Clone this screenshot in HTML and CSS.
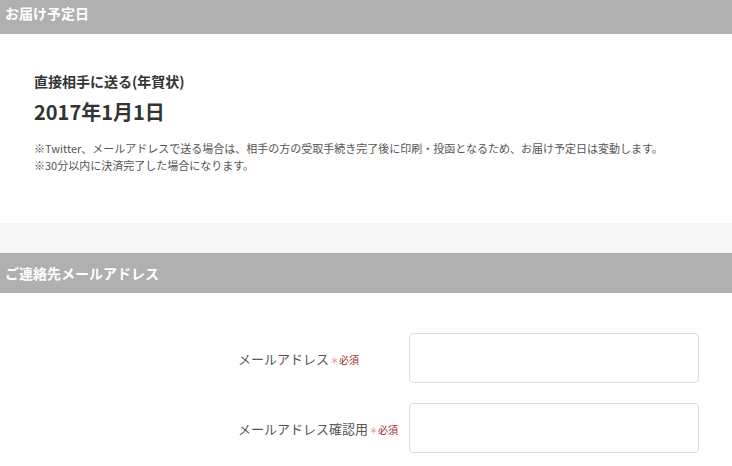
FILE: index.html
```html
<!DOCTYPE html>
<html lang="ja">
<head>
<meta charset="utf-8">
<title>お届け予定日</title>
<link rel="stylesheet" href="styles.css">
</head>
<body>
<section class="sec">
  <h2 class="sec-head sec-head--first">お届け予定日</h2>
  <div class="delivery">
    <p class="delivery-method">直接相手に送る(年賀状)</p>
    <p class="delivery-date">2017年1月1日</p>
    <p class="note">※Twitter、メールアドレスで送る場合は、相手の方の受取手続き完了後に印刷・投函となるため、お届け予定日は変動します。</p>
    <p class="note">※30分以内に決済完了した場合になります。</p>
  </div>
</section>
<div class="spacer"></div>
<section class="sec">
  <h2 class="sec-head">ご連絡先メールアドレス</h2>
  <div class="form">
    <div class="row">
      <label class="label" for="mail">メールアドレス<span class="req"><span class="req-star">＊</span>必須</span></label>
      <input class="input" id="mail" type="text">
    </div>
    <div class="row">
      <label class="label" for="mail2">メールアドレス確認用<span class="req"><span class="req-star">＊</span>必須</span></label>
      <input class="input" id="mail2" type="text">
    </div>
  </div>
</section>
</body>
</html>
```
FILE: styles.css
```css
html, body {
  margin: 0;
  padding: 0;
  background: #fff;
  font-family: "Noto Sans CJK JP", "Noto Sans", sans-serif;
  color: #333;
}
p { margin: 0; }
.sec-head {
  margin: 0;
  background: #b0b0b0;
  color: #fff;
  font-size: 14px;
  font-weight: bold;
  height: 40px;
  line-height: 40px;
  padding: 0 5px;
}
.sec-head--first {
  height: 34px;
  line-height: 27px;
}
.delivery {
  padding: 37px 34px 49px;
}
.delivery-method {
  font-size: 14px;
  font-weight: bold;
  line-height: 20px;
  color: #333;
}
.delivery-date {
  font-size: 20px;
  font-weight: bold;
  line-height: 26px;
  margin-top: 8px;
  margin-bottom: 15px;
  color: #333;
}
.note {
  font-size: 11px;
  line-height: 17px;
  color: #555;
  white-space: nowrap;
}
.spacer {
  height: 30px;
  background: #f6f6f6;
}
.form {
  padding: 40px 0 20px 238px;
  display: flex;
  flex-direction: column;
  gap: 20px;
}
.row {
  display: flex;
  align-items: center;
}
.label {
  width: 171px;
  font-size: 13px;
  color: #555;
  white-space: nowrap;
}
.req {
  font-size: 10px;
  color: #a52a2a;
  margin-left: 1px;
}
.req-star {
  color: #d98a8a;
  font-size: 9px;
}
.input {
  box-sizing: border-box;
  width: 290px;
  height: 50px;
  border: 1px solid #ddd;
  border-radius: 4px;
  background: #fff;
  margin: 0;
}
```
